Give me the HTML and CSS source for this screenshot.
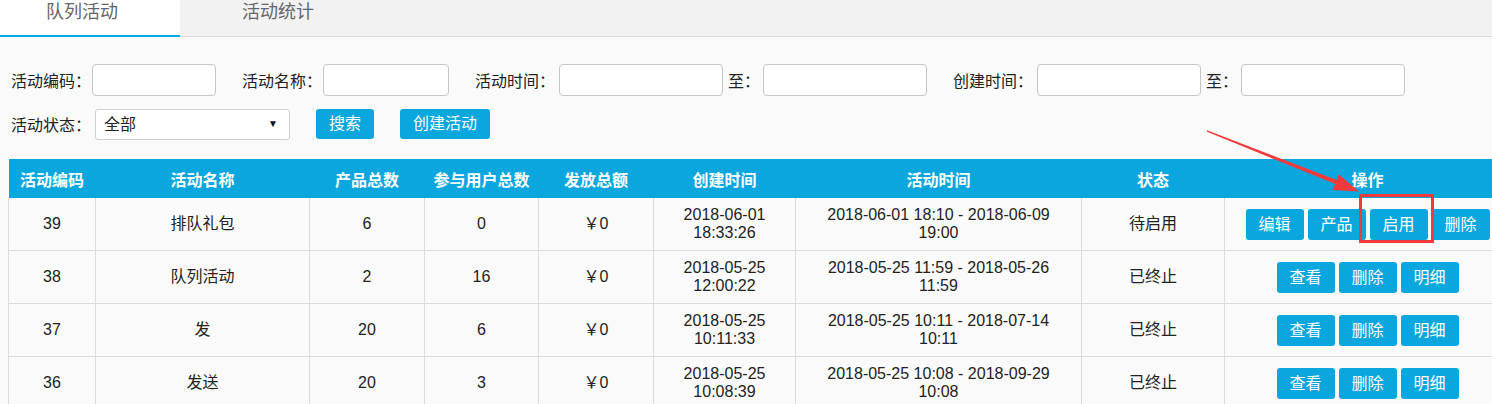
FILE: index.html
```html
<!DOCTYPE html>
<html lang="zh-CN">
<head>
    <meta charset="UTF-8">
    <meta name="viewport" content="width=device-width, initial-scale=1.0">
    <title>队列活动</title>
    <link rel="stylesheet" href="styles.css">
</head>
<body>
    <div class="tabs">
        <a class="tab tab-first active">队列活动</a>
        <a class="tab tab-second">活动统计</a>
        <div class="tab-rest"></div>
    </div>

    <div class="search">
        <div class="search-row">
            <div class="field">
                <span class="lbl">活动编码：</span>
                <input type="text" class="ipt ipt-s">
            </div>
            <div class="field">
                <span class="lbl">活动名称：</span>
                <input type="text" class="ipt ipt-m">
            </div>
            <div class="field">
                <span class="lbl">活动时间：</span>
                <input type="text" class="ipt ipt-l">
                <span class="to">至：</span>
                <input type="text" class="ipt ipt-l">
            </div>
            <div class="field">
                <span class="lbl">创建时间：</span>
                <input type="text" class="ipt ipt-l">
                <span class="to">至：</span>
                <input type="text" class="ipt ipt-l">
            </div>
        </div>
        <div class="search-row">
            <div class="field">
                <span class="lbl">活动状态：</span>
                <span class="select-wrap">
                    <select class="sel">
                        <option>全部</option>
                        <option>待启用</option>
                        <option>已终止</option>
                    </select>
                </span>
            </div>
            <button class="btn">搜索</button>
            <button class="btn">创建活动</button>
        </div>
    </div>

    <table class="grid">
        <colgroup>
            <col style="width:87px">
            <col style="width:214px">
            <col style="width:115px">
            <col style="width:114px">
            <col style="width:115px">
            <col style="width:142px">
            <col style="width:286px">
            <col style="width:143px">
            <col style="width:286px">
        </colgroup>
        <thead>
            <tr>
                <th>活动编码</th>
                <th>活动名称</th>
                <th>产品总数</th>
                <th>参与用户总数</th>
                <th>发放总额</th>
                <th>创建时间</th>
                <th>活动时间</th>
                <th>状态</th>
                <th>操作</th>
            </tr>
        </thead>
        <tbody>
            <tr>
                <td>39</td>
                <td>排队礼包</td>
                <td>6</td>
                <td>0</td>
                <td>￥0</td>
                <td>2018-06-01 18:33:26</td>
                <td class="period">2018-06-01 18:10 - 2018-06-09 19:00</td>
                <td>待启用</td>
                <td>
                    <div class="ops">
                        <button class="btn btn-op">编辑</button>
                        <button class="btn btn-op">产品</button>
                        <button class="btn btn-op">启用</button>
                        <button class="btn btn-op">删除</button>
                    </div>
                </td>
            </tr>
            <tr>
                <td>38</td>
                <td>队列活动</td>
                <td>2</td>
                <td>16</td>
                <td>￥0</td>
                <td>2018-05-25 12:00:22</td>
                <td class="period">2018-05-25 11:59 - 2018-05-26 11:59</td>
                <td>已终止</td>
                <td>
                    <div class="ops">
                        <button class="btn btn-op">查看</button>
                        <button class="btn btn-op">删除</button>
                        <button class="btn btn-op">明细</button>
                    </div>
                </td>
            </tr>
            <tr>
                <td>37</td>
                <td>发</td>
                <td>20</td>
                <td>6</td>
                <td>￥0</td>
                <td>2018-05-25 10:11:33</td>
                <td class="period">2018-05-25 10:11 - 2018-07-14 10:11</td>
                <td>已终止</td>
                <td>
                    <div class="ops">
                        <button class="btn btn-op">查看</button>
                        <button class="btn btn-op">删除</button>
                        <button class="btn btn-op">明细</button>
                    </div>
                </td>
            </tr>
            <tr>
                <td>36</td>
                <td>发送</td>
                <td>20</td>
                <td>3</td>
                <td>￥0</td>
                <td>2018-05-25 10:08:39</td>
                <td class="period">2018-05-25 10:08 - 2018-09-29 10:08</td>
                <td>已终止</td>
                <td>
                    <div class="ops">
                        <button class="btn btn-op">查看</button>
                        <button class="btn btn-op">删除</button>
                        <button class="btn btn-op">明细</button>
                    </div>
                </td>
            </tr>
        </tbody>
    </table>

    <svg class="mark" width="1492" height="404" viewBox="0 0 1492 404">
        <polygon fill="#f2393c" points="1207,130.3 1336.7,180.1 1338.6,174.2 1359,191.5 1332.4,190 1335.3,184.1 1207,131.7"/>
        <rect x="1360.5" y="195.5" width="72" height="46" fill="none" stroke="#f2393c" stroke-width="3"/>
    </svg>
</body>
</html>
```

FILE: styles.css
```css
body {
    margin: 0;
    background: #fafafa;
    font-family: "Liberation Sans", "Noto Sans CJK SC", sans-serif;
    font-size: 16px;
    color: #222;
    overflow: hidden;
    position: relative;
}
.tabs {
    display: flex;
    height: 37px;
    background: #f2f2f2;
}
.tab {
    display: block;
    box-sizing: border-box;
    height: 37px;
    line-height: 24px;
    font-size: 18px;
    color: #666;
    border-bottom: 1px solid #d9d9d9;
}
.tab-first {
    width: 180px;
    padding-left: 46px;
}
.tab-second {
    width: 196px;
    padding-left: 62px;
}
.tab-rest {
    flex: 1;
    border-bottom: 1px solid #d9d9d9;
}
.tab.active {
    background: #fff;
    border-bottom: 2px solid #0aa6de;
}
.search {
    padding: 27px 0 0 11px;
}
.search-row {
    display: flex;
    align-items: center;
    height: 32px;
    margin-bottom: 12px;
}
.field {
    display: flex;
    align-items: center;
    margin-right: 26px;
}
.lbl {
    width: 81px;
    white-space: nowrap;
}
.to {
    margin-left: 5px;
    width: 32px;
}
.ipt {
    box-sizing: border-box;
    height: 32px;
    border: 1px solid #c6c6c6;
    border-radius: 4px;
    background: #fff;
    padding: 0 6px;
    font-size: 14px;
}
.ipt-s { width: 124px; }
.ipt-m { width: 126px; }
.ipt-l { width: 164px; margin-left: 3px; }
.select-wrap {
    position: relative;
    display: inline-block;
    margin-left: 3px;
}
.sel {
    box-sizing: border-box;
    width: 195px;
    height: 31px;
    border: 1px solid #cfcfcf;
    border-radius: 3px;
    background: #fff;
    font-family: inherit;
    font-size: 16px;
    color: #222;
    padding: 0 8px;
    appearance: none;
    -webkit-appearance: none;
}
.select-wrap::after {
    content: "▼";
    position: absolute;
    right: 12px;
    top: 9px;
    font-size: 10px;
    color: #111;
    pointer-events: none;
}
.btn {
    box-sizing: border-box;
    height: 30px;
    padding: 0 13px;
    margin-right: 26px;
    border: none;
    border-radius: 3px;
    background: #0aa6de;
    color: #fff;
    font-family: inherit;
    font-size: 16px;
    line-height: 30px;
}
.grid {
    margin: 19px 0 0 8px;
    width: 1502px;
    table-layout: fixed;
    border-collapse: collapse;
}
.grid th {
    height: 39px;
    padding: 0;
    background: #0aa6de;
    color: #fff;
    font-weight: bold;
    text-align: center;
}
.grid td {
    height: 36px;
    padding: 8px 6px;
    border: 1px solid #dcdcdc;
    border-top: none;
    line-height: 18px;
    text-align: center;
    vertical-align: middle;
}
.grid td.period {
    padding: 8px 16px;
}
.ops {
    display: flex;
    justify-content: center;
    gap: 4px;
}
.btn-op {
    width: 58px;
    height: 31px;
    padding: 0;
    margin: 0;
    line-height: 31px;
}
.mark {
    position: absolute;
    left: 0;
    top: 0;
    pointer-events: none;
}
```
